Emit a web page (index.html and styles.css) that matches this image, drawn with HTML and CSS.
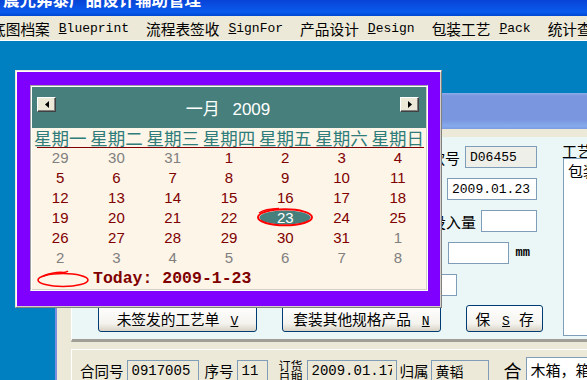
FILE: index.html
```html
<!DOCTYPE html>
<html lang="zh-CN">
<head>
  <meta charset="UTF-8">
  <title>晨光弗泰产品设计辅助管理</title>
  <link rel="stylesheet" href="styles.css">
</head>
<body>
  <div class="titlebar"><span class="app-title">晨光弗泰产品设计辅助管理</span></div>
  <nav class="menubar">
    <span class="menu-item"><span>底图档案</span><span class="en"><u>B</u>lueprint</span></span>
    <span class="menu-item"><span>流程表签收</span><span class="en"><u>S</u>ignFor</span></span>
    <span class="menu-item"><span>产品设计</span><span class="en"><u>D</u>esign</span></span>
    <span class="menu-item"><span>包装工艺</span><span class="en"><u>P</u>ack</span></span>
    <span class="menu-item"><span>统计查询</span><span class="en"><u>Q</u>uery</span></span>
  </nav>

  <div class="desktop">
    <div class="child">
      <div class="child-title"></div>
      <div class="child-body">
        <div class="panel-top">
          <div class="form-col">
            <div class="row"><label>款号</label><input class="ro w72" value="D06455" readonly></div>
            <div class="row"><input class="w90" value="2009.01.23" readonly></div>
            <div class="row"><label>投入量</label><input class="w56" value=""></div>
            <div class="row r4"><input class="w61" value=""><span class="unit">mm</span></div>
            <div class="row r5"><input class="w80" value=""></div>
            <div class="btn-row">
              <button class="btn wide">未签发的工艺单<span class="key">V</span></button>
              <button class="btn wide">套装其他规格产品<span class="key">N</span></button>
              <button class="btn save">保<span class="key s">S</span>存</button>
            </div>
          </div>
          <div class="side-col">
            <div class="side-label">工艺</div>
            <div class="memo">包装</div>
          </div>
        </div>

        <div class="panel-bottom">
          <label>合同号</label>
          <input class="flat w72 ml3" value="0917005" readonly>
          <label class="ml6">序号</label>
          <input class="flat w31 ml3" value="11" readonly>
          <label class="small ml11">订货<br>日期</label>
          <input class="flat w90 ml4" value="2009.01.17" readonly>
          <label class="ml3">归属</label>
          <input class="flat w58 ml2" value="黄韬" readonly>
          <label class="big ml15">合<br>同</label>
          <div class="memo2">木箱，箱<br>外面标注</div>
        </div>
      </div>
    </div>

    <div class="popup">
      <div class="calendar">
        <div class="cal-head">
          <button class="cal-nav"><svg width="4" height="7" viewBox="0 0 4 7"><polygon points="4,0 4,7 0,3.5"/></svg></button>
          <div class="cal-title">一月 2009</div>
          <button class="cal-nav"><svg width="4" height="7" viewBox="0 0 4 7"><polygon points="0,0 0,7 4,3.5"/></svg></button>
        </div>
        <div class="weekdays">
          <span>星期一</span><span>星期二</span><span>星期三</span><span>星期四</span><span>星期五</span><span>星期六</span><span>星期日</span>
        </div>
        <div class="cal-rule"></div>
        <div class="days">
          <span class="other">29</span><span class="other">30</span><span class="other">31</span><span>1</span><span>2</span><span>3</span><span>4</span>
          <span>5</span><span>6</span><span>7</span><span>8</span><span>9</span><span>10</span><span>11</span>
          <span>12</span><span>13</span><span>14</span><span>15</span><span>16</span><span>17</span><span>18</span>
          <span>19</span><span>20</span><span>21</span><span>22</span>
          <span class="sel">
            <svg class="sel-mark" width="56" height="20" viewBox="0 0 56 20">
              <ellipse cx="28" cy="10.5" rx="25.5" ry="7" fill="#467f7c"/>
              <ellipse cx="28" cy="10.3" rx="27" ry="8" fill="none" stroke="#f00" stroke-width="2"/>
              <path d="M2 6 Q8 2 22 1.6" fill="none" stroke="#f00" stroke-width="1.5"/>
            </svg>
            <b>23</b>
          </span>
          <span>24</span><span>25</span>
          <span>26</span><span>27</span><span>28</span><span>29</span><span>30</span><span>31</span><span class="other">1</span>
          <span class="other">2</span><span class="other">3</span><span class="other">4</span><span class="other">5</span><span class="other">6</span><span class="other">7</span><span class="other">8</span>
        </div>
        <div class="today">
          <svg width="53" height="18" viewBox="0 0 53 18">
            <ellipse cx="26" cy="10" rx="25" ry="6.5" fill="none" stroke="#f00" stroke-width="1.6"/>
            <path d="M6 6 Q18 1.5 27 2.5 Q30 2 31 1" fill="none" stroke="#f00" stroke-width="1.5"/>
          </svg>
          <span class="today-text">Today: 2009-1-23</span>
        </div>
      </div>
    </div>
  </div>
</body>
</html>
```

FILE: styles.css
```css
* {
  box-sizing: border-box;
}
body {
  margin: 0;
  width: 587px;
  height: 380px;
  overflow: hidden;
  background-color: #0080c0;
  font-family: "Noto Sans CJK SC", sans-serif;
  color: #000;
}

/* main window frame */
.titlebar {
  height: 16px;
  overflow: hidden;
  background: linear-gradient(#0843d6, #0a5bee 75%, #0048d0);
}
.app-title {
  display: block;
  margin-top: -9px;
  padding-left: 3px;
  color: #fff;
  font-weight: bold;
  font-size: 16.5px;
  line-height: 16.5px;
  white-space: nowrap;
}
.menubar {
  display: flex;
  align-items: center;
  gap: 17px;
  height: 25px;
  padding-top: 1px;
  background-color: #ece9d8;
  border-bottom: 1px solid #fff;
  font-size: 14.7px;
  white-space: nowrap;
  overflow: hidden;
}
.menu-item {
  display: flex;
  align-items: center;
  gap: 9px;
  flex-shrink: 0;
}
.menu-item:first-child {
  margin-left: -9px;
}
.en {
  font-family: "Liberation Mono", monospace;
  font-size: 13px;
}
.desktop {
  position: relative;
  height: 339px;
}

/* child window behind the popup */
.child {
  position: absolute;
  left: 55px;
  top: 52px;
  width: 545px;
  height: 300px;
  border-left: 2px solid #7b8ee0;
  background-color: #ece9d8;
}
.child-title {
  height: 36px;
  background: linear-gradient(#8eabe9 0, #7a96df 3px, #7a96df 27px, #86aaec 33px, #7b9ae2 36px);
}
.child-body {
  padding: 8px 0 0 14px;
}
.panel-top {
  display: flex;
  height: 205px;
  background-color: #ebf6f6;
  border-left: 1px solid #fff;
  border-bottom: 3px solid #a09e96;
}
.form-col {
  width: 489px;
  flex-shrink: 0;
  padding-top: 9px;
  display: flex;
  flex-direction: column;
  gap: 10px;
}
.row {
  display: flex;
  justify-content: flex-end;
  align-items: center;
  gap: 5px;
  height: 22px;
  padding-right: 24px;
  font-size: 15px;
}
.row.r4 {
  gap: 7px;
  padding-right: 31px;
}
.row.r5 {
  padding-right: 104px;
}
input {
  height: 22px;
  padding: 0 4px;
  border: 1px solid #7f9db9;
  background-color: #fff;
  font-family: "Liberation Mono", "Noto Sans CJK SC", monospace;
  font-size: 13px;
  color: #000;
  outline: none;
}
input.ro {
  background-color: #efefe9;
}
.w31 { width: 31px; }
.w56 { width: 56px; }
.w58 { width: 58px; }
.w61 { width: 61px; }
.w72 { width: 72px; }
.w80 { width: 80px; }
.w90 { width: 90px; }
.unit {
  font-family: "Liberation Mono", monospace;
  font-size: 12px;
  font-weight: bold;
}
.btn-row {
  display: flex;
  gap: 25px;
  padding-left: 26px;
  margin-top: -1px;
}
.btn {
  height: 27px;
  padding: 0;
  border: 1px solid #003c74;
  border-radius: 3px;
  background: linear-gradient(#ffffff, #f4f3ee 70%, #d8d3c6);
  font-family: "Noto Sans CJK SC", sans-serif;
  font-size: 14.7px;
  color: #000;
}
.btn.wide {
  width: 159px;
}
.btn.save {
  width: 77px;
}
.key {
  margin-left: 11px;
  font-family: "Liberation Mono", monospace;
  font-size: 13px;
  text-decoration: underline;
}
.key.s {
  margin: 0 9px 0 12px;
}
.side-col {
  padding: 6px 0 0 1px;
}
.side-label {
  height: 15px;
  font-size: 15px;
  line-height: 15px;
}
.memo {
  margin-left: 1px;
  width: 60px;
  height: 178px;
  padding: 3px 4px;
  background-color: #fff;
  border: 1px solid #7f9db9;
  font-size: 15px;
  line-height: 18px;
}
.panel-bottom {
  display: flex;
  align-items: flex-start;
  margin-top: 7px;
  height: 40px;
  padding: 10px 0 0 8px;
  border-top: 1px solid #fff;
  border-left: 1px solid #fff;
  font-size: 14.5px;
}
.panel-bottom label {
  line-height: 22px;
  white-space: nowrap;
}
.panel-bottom label.small {
  width: 24px;
  font-size: 12px;
  line-height: 12px;
}
.panel-bottom label.big {
  font-size: 18px;
  line-height: 21px;
}
input.flat {
  background-color: #ece9d8;
  font-size: 14px;
}
.ml2 { margin-left: 2px; }
.ml3 { margin-left: 3px; }
.ml4 { margin-left: 4px; }
.ml6 { margin-left: 6px; }
.ml11 { margin-left: 11px; }
.ml15 { margin-left: 15px; }
.memo2 {
  margin: -3px 0 0 4px;
  width: 80px;
  height: 40px;
  padding: 2px 4px;
  background-color: #fff;
  border: 1px solid #7f9db9;
  font-size: 15px;
  line-height: 19px;
  white-space: nowrap;
  overflow: hidden;
}

/* calendar popup */
.popup {
  position: absolute;
  left: 15px;
  top: 29px;
  width: 427px;
  height: 238px;
  padding: 14px 13px 16px 14px;
  background-color: #8000ff;
  border: 1px solid;
  border-color: #ece9d8 #808080 #808080 #ece9d8;
  box-shadow: inset 1px 1px #fff, inset -1px -1px #d4d0c8;
}
.calendar {
  height: 206px;
  background-color: #fdf5e8;
  border: 1px solid;
  border-color: #a0a0a0 #fff #fff #a0a0a0;
  box-shadow: inset 1px 1px #fff, inset -1px -1px #d4d0c8;
  padding: 1px;
}
.cal-head {
  display: flex;
  height: 41px;
  padding: 0 7px 0 5px;
  background-color: #467f7c;
}
.cal-nav {
  margin-top: 10px;
  width: 19px;
  height: 15px;
  padding: 0;
  display: flex;
  align-items: center;
  justify-content: center;
  background-color: #ece9d8;
  border: 1px solid;
  border-color: #fff #404040 #404040 #fff;
  box-shadow: inset -1px -1px #808080;
}
.cal-title {
  flex: 1;
  align-self: center;
  text-align: center;
  color: #fff;
  font-family: "Liberation Sans", "Noto Sans CJK SC", sans-serif;
  font-size: 17px;
  word-spacing: 8px;
}
.weekdays {
  display: grid;
  grid-template-columns: repeat(7, 1fr);
  height: 19px;
  color: #2e7d7b;
  font-size: 17.5px;
  line-height: 19px;
  text-align: center;
  white-space: nowrap;
}
.cal-rule {
  height: 1px;
  margin: 0 2px 0 5px;
  background-color: #800000;
}
.days {
  display: grid;
  grid-template-columns: repeat(7, 1fr);
  grid-auto-rows: 20px;
  font-family: "Liberation Sans", sans-serif;
  font-size: 15px;
  line-height: 20px;
  text-align: center;
  color: #800000;
}
.days .other {
  color: #808080;
}
.days .sel {
  position: relative;
}
.sel-mark {
  position: absolute;
  left: 0;
  top: -1px;
}
.sel b {
  position: relative;
  font-weight: normal;
  color: #fff;
}
.today {
  display: flex;
  align-items: center;
  gap: 3px;
  height: 21px;
  padding-left: 5px;
}
.today-text {
  font-family: "Liberation Mono", monospace;
  font-weight: bold;
  font-size: 16.5px;
  color: #800000;
  white-space: nowrap;
}
```
